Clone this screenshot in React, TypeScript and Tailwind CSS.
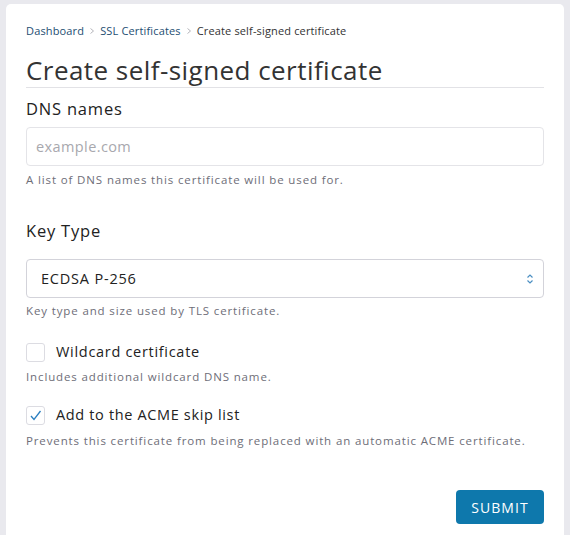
import React from "react";

const font = { fontFamily: '"Open Sans", "Liberation Sans", sans-serif' };

function Chevron() {
  return (
    <svg width="8" height="8" viewBox="0 0 8 8" className="mx-[4px]">
      <path d="M2.5 1.5 L5.5 4 L2.5 6.5" fill="none" stroke="#b5b5bb" strokeWidth="1" />
    </svg>
  );
}

export default function App() {
  return (
    <div className="min-h-[535px] bg-[#e9e9ee] pl-[6px] pr-[6px] pt-[4px]" style={font}>
      <div className="min-h-[531px] w-[558px] rounded-t-[5px] bg-white px-[20px] pt-[19px]">
        <nav className="flex h-[16px] items-center text-[11px] leading-[16px] tracking-[0.15px]">
          <span className="text-[#1d4e72]">Dashboard</span>
          <Chevron />
          <span className="text-[#1d4e72]">SSL Certificates</span>
          <Chevron />
          <span className="text-[#333]">Create self-signed certificate</span>
        </nav>
        <h1 className="mt-[15px] border-b border-[#e2e2e6] pb-[1px] text-[26px] font-normal leading-[32px] tracking-[0.45px] text-[#333]">
          Create self-signed certificate
        </h1>
        <div className="mt-[9px] text-[16.5px] leading-[24px] tracking-[0.8px] text-[#222]">DNS names</div>
        <input
          className="mt-[6px] block h-[39px] w-full rounded-[4px] border border-[#e4e4e8] px-[9px] text-[14.5px] tracking-[0.4px] text-[#333] outline-none placeholder:text-[#a8a8ae]"
          placeholder="example.com"
        />
        <p className="mt-[6px] text-[11.5px] leading-[16px] tracking-[0.87px] text-[#6e6e78]">
          A list of DNS names this certificate will be used for.
        </p>
        <div className="mt-[31px] text-[16.5px] leading-[24px] tracking-[0.8px] text-[#222]">Key Type</div>
        <div className="mt-[16px] flex h-[39px] items-center justify-between rounded-[4px] border border-[#d3d3da] pl-[14px] pr-[8px]">
          <span className="text-[14.5px] tracking-[0.8px] text-[#222]">ECDSA P-256</span>
          <svg width="10" height="12" viewBox="0 0 10 12">
            <path d="M2.5 4.5 L5 2 L7.5 4.5" fill="none" stroke="#4b8fc2" strokeWidth="1.2" />
            <path d="M2.5 7.5 L5 10 L7.5 7.5" fill="none" stroke="#4b8fc2" strokeWidth="1.2" />
          </svg>
        </div>
        <p className="mt-[5px] text-[11.5px] leading-[16px] tracking-[0.87px] text-[#6e6e78]">
          Key type and size used by TLS certificate.
        </p>
        <label className="mt-[23px] flex items-center gap-[11px]">
          <span className="h-[19px] w-[19px] rounded-[3px] border border-[#dcdce2] bg-white" />
          <span className="text-[14.5px] leading-[20px] tracking-[0.7px] text-[#222]">Wildcard certificate</span>
        </label>
        <p className="mt-[7px] text-[11.5px] leading-[16px] tracking-[0.87px] text-[#6e6e78]">
          Includes additional wildcard DNS name.
        </p>
        <label className="mt-[20px] flex items-center gap-[11px]">
          <span className="flex h-[19px] w-[19px] items-center justify-center rounded-[3px] border border-[#dcdce2] bg-white">
            <svg width="13" height="13" viewBox="0 0 13 13">
              <path d="M2 7 L5 10.5 L11.5 2" fill="none" stroke="#2b7fc0" strokeWidth="1.3" />
            </svg>
          </span>
          <span className="text-[14.5px] leading-[20px] tracking-[0.65px] text-[#222]">Add to the ACME skip list</span>
        </label>
        <p className="mt-[8px] text-[11.5px] leading-[16px] tracking-[0.87px] text-[#6e6e78]">
          Prevents this certificate from being replaced with an automatic ACME certificate.
        </p>
        <div className="mt-[41px] flex justify-end">
          <button className="h-[34px] w-[88px] rounded-[4px] bg-[#0e78ac] text-[14px] uppercase tracking-[1.1px] text-white">
            Submit
          </button>
        </div>
      </div>
    </div>
  );
}
